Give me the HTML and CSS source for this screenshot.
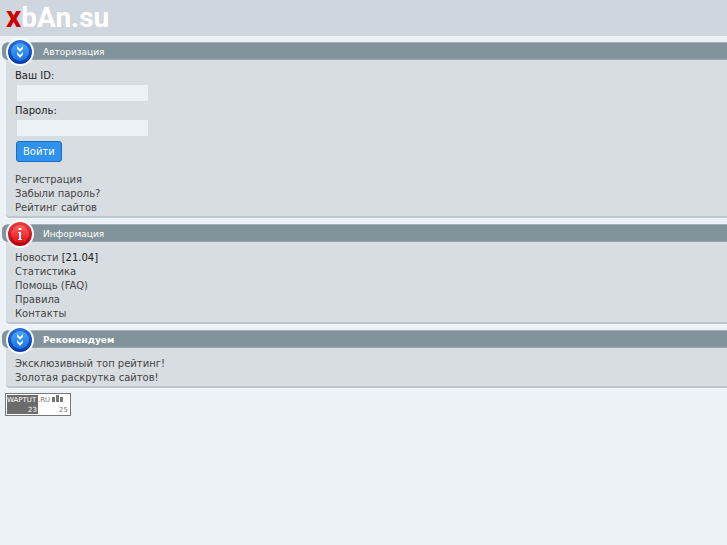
FILE: index.html
```html
<!DOCTYPE html>
<html lang="ru">
<head>
  <meta charset="UTF-8">
  <title>xban.su</title>
  <link rel="stylesheet" href="styles.css">
</head>
<body>
  <svg class="defs" width="0" height="0" aria-hidden="true">
    <linearGradient id="blueRing" x1="0" y1="0" x2="0" y2="1">
      <stop offset="0" stop-color="#2b6fe0"/>
      <stop offset="1" stop-color="#0638a4"/>
    </linearGradient>
    <linearGradient id="blueFill" x1="0" y1="0" x2="0" y2="1">
      <stop offset="0" stop-color="#48a8ff"/>
      <stop offset="1" stop-color="#1870e4"/>
    </linearGradient>
    <linearGradient id="redRing" x1="0" y1="0" x2="0" y2="1">
      <stop offset="0" stop-color="#f03c3c"/>
      <stop offset="1" stop-color="#a80008"/>
    </linearGradient>
    <linearGradient id="redFill" x1="0" y1="0" x2="0" y2="1">
      <stop offset="0" stop-color="#ff6464"/>
      <stop offset="1" stop-color="#e80c14"/>
    </linearGradient>
    <symbol id="arrows" viewBox="0 0 28 28">
      <circle cx="14" cy="14" r="14" fill="#f6fafc"/>
      <circle cx="14" cy="14" r="12" fill="url(#blueRing)"/>
      <circle cx="14" cy="14" r="9" fill="url(#blueFill)"/>
      <path d="M11 8l3 3 3-3v2.500l-3 3.500-3-3.500zM11 14l3 3 3-3v2.500l-3 3.500-3-3.500z" fill="#fff"/>
    </symbol>
    <symbol id="info" viewBox="0 0 28 28">
      <circle cx="14" cy="14" r="14" fill="#f6fafc"/>
      <circle cx="14" cy="14" r="12" fill="url(#redRing)"/>
      <circle cx="14" cy="14" r="9" fill="url(#redFill)"/>
      <path d="M12.500 8h3v2h-3zM12 12h3v7h1v1h-4v-1h1v-6h-1z" fill="#fff"/>
    </symbol>
  </svg>

  <div class="logo"><span>x</span>bAn.su</div>

  <div class="block">
    <div class="title">
      <svg class="icon"><use href="#arrows"/></svg>
      Авторизация
    </div>
    <div class="menu">
      <form>
        <label for="login">Ваш ID:</label>
        <input type="text" id="login" name="login">
        <label for="pass">Пароль:</label>
        <input type="password" id="pass" name="pass">
        <button type="submit">Войти</button>
      </form>
      <div><a href="#">Регистрация</a></div>
      <div><a href="#">Забыли пароль?</a></div>
      <div><a href="#">Рейтинг сайтов</a></div>
    </div>
  </div>

  <div class="block">
    <div class="title">
      <svg class="icon"><use href="#info"/></svg>
      Информация
    </div>
    <div class="menu">
      <div><a href="#">Новости</a> [21.04]</div>
      <div><a href="#">Статистика</a></div>
      <div><a href="#">Помощь (FAQ)</a></div>
      <div><a href="#">Правила</a></div>
      <div><a href="#">Контакты</a></div>
    </div>
  </div>

  <div class="block">
    <div class="title">
      <svg class="icon"><use href="#arrows"/></svg>
      <b>Рекомендуем</b>
    </div>
    <div class="menu">
      <div><a href="#">Эксклюзивный топ рейтинг!</a></div>
      <div><a href="#">Золотая раскрутка сайтов!</a></div>
    </div>
  </div>

  <a class="counter" href="#">
    <span class="left"><span>WAPTUT</span><span>23</span></span>
    <span class="right">
      <span>.RU <svg width="11" height="7"><path d="M0 2h3v5H0zM4 0h3v7H4zM8 2h3v5H8z" fill="#777"/></svg></span>
      <span>25</span>
    </span>
  </a>
</body>
</html>
```

FILE: styles.css
```css
* { box-sizing: border-box; }

body {
  margin: 0;
  background: #edf2f6;
  color: #222;
  font-family: "DejaVu Sans", Verdana, sans-serif;
  font-size: 10px;
  line-height: 14px;
}

a {
  color: #444;
  text-decoration: none;
}

a:hover {
  text-decoration: underline;
}

.defs {
  position: absolute;
}

.logo {
  height: 36px;
  padding-left: 6px;
  background: #cfd6de;
  color: #fff;
  font-family: Roboto, sans-serif;
  font-size: 28px;
  font-weight: bold;
  line-height: 34px;
}

.logo span {
  color: #c00;
  font-size: 30px;
}

.block {
  margin-top: 6px;
}

.title {
  position: relative;
  height: 18px;
  margin-left: 2px;
  padding-left: 41px;
  background: #82939b;
  border-top: 1px solid #a3b0b6;
  border-bottom: 1px solid #97a5ac;
  border-radius: 6px 0 0 6px;
  color: #fff;
  font-size: 9px;
  line-height: 18px;
}

.icon {
  position: absolute;
  left: 4px;
  top: -5px;
  width: 28px;
  height: 28px;
}

.menu {
  margin-left: 6px;
  padding: 9px 8px 1px 9px;
  background: #d8dde1;
  border-bottom: 2px solid #bdc7cc;
  border-radius: 0 0 0 4px;
}

form {
  margin-bottom: 11px;
}

label {
  display: block;
}

input {
  display: block;
  width: 131px;
  height: 16px;
  margin: 2px 2px 3px;
  padding: 0 2px;
  background: #edf2f6;
  border: 0;
  font: inherit;
}

button {
  display: block;
  height: 21px;
  margin: 5px 1px 0;
  padding: 0 6px;
  background: #2f92ec;
  border: 1px solid #146fc4;
  border-radius: 3px;
  color: #fff;
  font: inherit;
  cursor: pointer;
}

.counter {
  display: flex;
  width: 66px;
  height: 23px;
  margin: 5px;
  padding: 1px;
  background: #fff;
  border: 1px solid #777;
  color: #777;
  font-size: 7px;
  line-height: 10px;
}

.left,
.right {
  display: flex;
  flex: 1;
  flex-direction: column;
  white-space: nowrap;
}

.left {
  background: #6c6c6c;
  color: #fff;
}

.left span:last-child,
.right span:last-child {
  align-self: flex-end;
  padding-right: 1px;
}
```
